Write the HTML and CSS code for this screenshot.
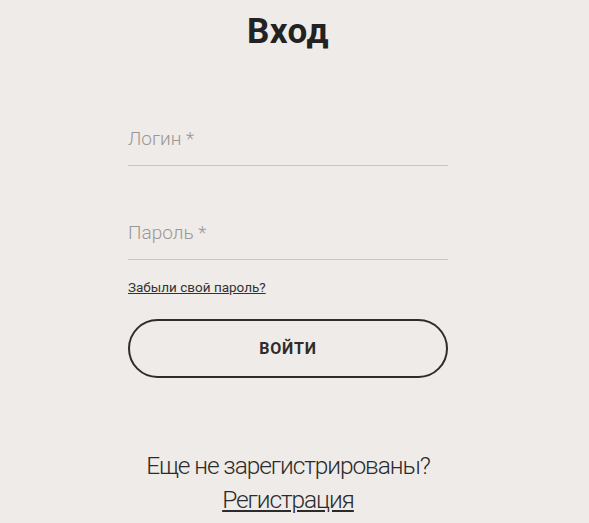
FILE: index.html
```html
<!DOCTYPE html>
<html lang="ru">
<head>
<meta charset="utf-8">
<title>Вход</title>
<link rel="stylesheet" href="styles.css">
</head>
<body>
<main class="auth">
  <h1 class="auth-title">Вход</h1>
  <form class="auth-form">
    <label class="field">
      <input class="field-input" type="text" placeholder="Логин *">
    </label>
    <label class="field field-password">
      <input class="field-input" type="password" placeholder="Пароль *">
    </label>
    <a class="forgot" href="#">Забыли свой пароль?</a>
    <button class="submit" type="button">ВОЙТИ</button>
  </form>
  <div class="register">
    <p class="register-question">Еще не зарегистрированы?</p>
    <a class="register-link" href="#">Регистрация</a>
  </div>
</main>
</body>
</html>
```
FILE: styles.css
```css
html, body {
  margin: 0;
  padding: 0;
  background: #efebe8;
}

body {
  font-family: Roboto, "Liberation Sans", sans-serif;
  color: #2b2b2b;
}

.auth {
  width: 320px;
  margin-left: 128px;
  padding-top: 11px;
  display: flex;
  flex-direction: column;
}

.auth-title {
  margin: 0;
  text-align: center;
  font-size: 35px;
  line-height: 42px;
  font-weight: 700;
  letter-spacing: 0.5px;
  color: #222;
}

.auth-form {
  display: flex;
  flex-direction: column;
  margin-top: 74px;
}

.field {
  display: block;
  border-bottom: 1px solid #c8c5c2;
}

.field-password {
  margin-top: 55px;
}

.field-input {
  display: block;
  width: 100%;
  box-sizing: border-box;
  border: 0;
  background: transparent;
  padding: 0 0 14px;
  font-family: Roboto, "Liberation Sans", sans-serif;
  font-size: 19px;
  font-weight: 300;
  line-height: 24px;
  color: #333;
  outline: none;
}

.field-input::placeholder {
  color: #9a9795;
  opacity: 1;
}

.forgot {
  margin-top: 19px;
  align-self: flex-start;
  font-size: 13.5px;
  line-height: 17px;
  color: #333;
  text-decoration: underline;
}

.submit {
  margin-top: 23px;
  height: 59px;
  border: 2px solid #2f2c2a;
  border-radius: 30px;
  background: transparent;
  font-family: Roboto, "Liberation Sans", sans-serif;
  font-size: 16px;
  font-weight: 700;
  letter-spacing: 0.8px;
  color: #2f2c2a;
}

.register {
  margin-top: 71px;
  display: flex;
  flex-direction: column;
  align-items: center;
}

.register-question {
  margin: 0;
  font-size: 24.5px;
  line-height: 34px;
  font-weight: 300;
  letter-spacing: -1.1px;
  color: #2b2b2b;
}

.register-link {
  font-size: 24.5px;
  line-height: 34px;
  font-weight: 300;
  letter-spacing: -1.1px;
  color: #2b2b2b;
  text-decoration: underline;
}
```
